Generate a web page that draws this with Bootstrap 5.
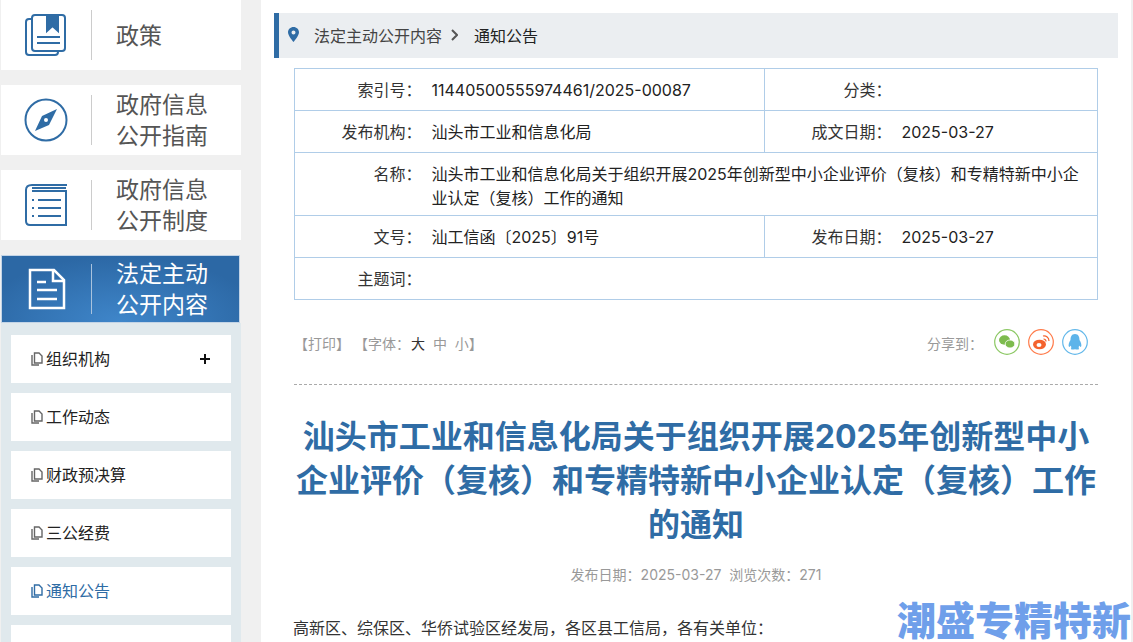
<!doctype html>
<html lang="zh">
<head>
<meta charset="utf-8">
<title>通知公告</title>
<link href="https://cdn.jsdelivr.net/npm/bootstrap@5.3.0/dist/css/bootstrap.min.css" rel="stylesheet">
<style>
html,body{height:642px;overflow:hidden}
body{background:#f0f0f0;font-family:Inter,"Noto Sans CJK SC","Liberation Sans",sans-serif;font-size:16px;color:#333;position:relative}
.shell{height:642px;padding-right:2px}
.sidebar{width:261px;flex:none;padding-left:1px;padding-right:20px}
.bigitem{height:70px;margin-bottom:15px;background:#fff;color:#555;font-size:23px;line-height:31px}
.bigtxt{padding-top:1px}
.bigtxt.solo{padding-top:3px}
.bigitem.on{height:68px;margin-bottom:0;margin-right:1px;color:#fff;border:1px solid #c3d4e6;background:radial-gradient(ellipse 60% 100% at 50% 100%,#3f86ca,#2c68a5)}
.bigicon{width:90px;flex:none}
.on .bigicon{width:89px}
.bigrule{width:1px;height:50px;background:#ccc;flex:none;margin-right:24px}
.on .bigrule{background:#a9c3de}
.submenu{background:#e0e9ed;padding:12px 10px 0}
.subitem{height:48px;background:#fff;margin-bottom:10px;padding:0 21px 0 20px;color:#222;line-height:24px}
.subitem.cur{color:#2f6ca5}
.pageglyph{margin-right:3px;flex:none}
.mainpane{background:#fff;padding:13px 13px 0 13px;min-width:0}
.crumb{height:45px;background:#ebeef1;border-left:5px solid #2f6ca5;padding:0 0 0 9px;color:#444}
.crumb .pin{margin-right:15px;margin-bottom:2px}
.crumb .sep{margin:0 16px 2px 9px}
.crumb .now{color:#222}
.metawrap{margin:10px 20px 0}
.metatable{table-layout:fixed;width:803px;border-collapse:collapse;color:#222;margin:0}
.metatable td{border:1px solid #b0cde8;padding:0 10px 0 9px;height:42px;vertical-align:middle;line-height:24px}
.metatable td.lab{text-align:right;padding:0 1px 0 0;color:#333;border-right:0}
.metatable td.val{border-left:0}
.metatable tr.tall td{height:63px;vertical-align:top;padding-top:9px}
.tools{height:85px;border-bottom:1px dashed #aaa;padding:3px 10px 0 0;color:#999;font-size:14px}
.tools .blk{color:#333;margin-left:1px}
.fontsizes span{margin-left:4px}
.sharewrap{margin-top:-3px}
.sharelabel{margin-top:3px;margin-right:3px}
.sharebtn{margin-left:8px}
.headline{color:#2f6ca5;font-size:32px;font-weight:700;line-height:44px;text-align:center;margin:30px 0 0}
.dateline{color:#999;font-size:14px;text-align:center;margin-top:18px;line-height:20px}
.para{margin:31px 0 0;color:#333;line-height:24px;margin-left:-1px}
.brandmark{position:absolute;left:897px;top:600px;white-space:nowrap;font-size:39px;line-height:42px;font-weight:900;color:#6f9fea}
</style>
</head>
<body>
<div class="shell d-flex">
  <aside class="sidebar">
    <div class="bigitem d-flex align-items-center">
      <div class="bigicon d-flex justify-content-center">
        <svg width="42" height="43" viewBox="0 0 42 43" fill="none" stroke="#2f6ca5" stroke-width="2"><path d="M6 5 H4 Q1 5 1 8 V38 Q1 41 4 41 H30 Q33 41 33 38"/><rect x="7" y="1" width="33" height="36" rx="3"/><path d="M22 1 H33 V17 L27.5 12 L22 17 Z" fill="#2f6ca5"/><path d="M12 23 H35 M12 29 H35"/></svg>
      </div>
      <div class="bigrule"></div><div class="bigtxt solo">政策</div>
    </div>
    <div class="bigitem d-flex align-items-center">
      <div class="bigicon d-flex justify-content-center">
        <svg width="44" height="44" viewBox="0 0 44 44"><circle cx="22" cy="22" r="20.5" fill="none" stroke="#2f6ca5" stroke-width="2"/><path d="M33 11 L25 27 L11 33 L18 18 Z" fill="#2f6ca5"/><circle cx="22" cy="22" r="2" fill="#fff"/></svg>
      </div>
      <div class="bigrule"></div><div class="bigtxt">政府信息<br>公开指南</div>
    </div>
    <div class="bigitem d-flex align-items-center">
      <div class="bigicon d-flex justify-content-center">
        <svg width="44" height="44" viewBox="0 0 44 44" fill="none" stroke="#2f6ca5" stroke-width="2"><path d="M43 2 H8 Q2 2 2 7 V38 Q2 42 6 42 H42 V8 H8"/><path d="M8 5 H42" stroke-width="2"/><path d="M14 17 H37 M14 25 H37 M14 33 H37"/><path d="M8 17 H10 M8 25 H10 M8 33 H10"/></svg>
      </div>
      <div class="bigrule"></div><div class="bigtxt">政府信息<br>公开制度</div>
    </div>
    <div class="bigitem on d-flex align-items-center">
      <div class="bigicon d-flex justify-content-center">
        <svg width="38" height="42" viewBox="0 0 38 42" fill="none" stroke="#fff" stroke-width="2.5"><path d="M2 2 H26 L36 12 V40 H2 Z"/><path d="M25 2 V13 H36"/><path d="M9 14 H18 M9 22 H29 M9 31 H29"/></svg>
      </div>
      <div class="bigrule"></div><div class="bigtxt">法定主动<br>公开内容</div>
    </div>
    <div class="submenu">
      <div class="subitem d-flex align-items-center">
        <svg class="pageglyph" width="12" height="14" viewBox="0 0 12 14" fill="none" stroke="#666" stroke-width="1.4"><path d="M1 3 V13 H8"/><path d="M3.5 1 H8 L11 4 V11 H3.5 Z"/></svg>
        <span class="flex-grow-1">组织机构</span>
        <svg width="10" height="10" viewBox="0 0 10 10" stroke="#111" stroke-width="2"><path d="M0 5 H10 M5 0 V10"/></svg>
      </div>
      <div class="subitem d-flex align-items-center"><svg class="pageglyph" width="12" height="14" viewBox="0 0 12 14" fill="none" stroke="#666" stroke-width="1.4"><path d="M1 3 V13 H8"/><path d="M3.5 1 H8 L11 4 V11 H3.5 Z"/></svg><span>工作动态</span></div>
      <div class="subitem d-flex align-items-center"><svg class="pageglyph" width="12" height="14" viewBox="0 0 12 14" fill="none" stroke="#666" stroke-width="1.4"><path d="M1 3 V13 H8"/><path d="M3.5 1 H8 L11 4 V11 H3.5 Z"/></svg><span>财政预决算</span></div>
      <div class="subitem d-flex align-items-center"><svg class="pageglyph" width="12" height="14" viewBox="0 0 12 14" fill="none" stroke="#666" stroke-width="1.4"><path d="M1 3 V13 H8"/><path d="M3.5 1 H8 L11 4 V11 H3.5 Z"/></svg><span>三公经费</span></div>
      <div class="subitem cur d-flex align-items-center"><svg class="pageglyph" width="12" height="14" viewBox="0 0 12 14" fill="none" stroke="#2f6ca5" stroke-width="1.4"><path d="M1 3 V13 H8"/><path d="M3.5 1 H8 L11 4 V11 H3.5 Z"/></svg><span>通知公告</span></div>
      <div class="subitem"></div>
    </div>
  </aside>
  <main class="mainpane flex-grow-1">
    <div class="crumb d-flex align-items-center">
      <svg class="pin" width="11" height="15" viewBox="0 0 11 15"><path fill="#2f6ca5" fill-rule="evenodd" d="M5.5 0 C2.4 0 0 2.4 0 5.3 C0 9 5.5 15 5.5 15 S11 9 11 5.3 C11 2.4 8.6 0 5.5 0 Z M5.5 3.5 A2 2 0 1 1 5.5 7.5 A2 2 0 1 1 5.5 3.5 Z"/></svg>
      <span>法定主动公开内容</span>
      <svg class="sep" width="7" height="12" viewBox="0 0 7 12" fill="none" stroke="#555" stroke-width="2"><path d="M1 1 L6 6 L1 11"/></svg>
      <span class="now">通知公告</span>
    </div>
    <div class="metawrap">
      <table class="metatable">
        <colgroup><col style="width:128px"><col style="width:342px"><col style="width:128px"><col style="width:205px"></colgroup>
        <tr><td class="lab">索引号：</td><td class="val">11440500555974461/2025-00087</td><td class="lab">分类：</td><td class="val"></td></tr>
        <tr><td class="lab">发布机构：</td><td class="val">汕头市工业和信息化局</td><td class="lab">成文日期：</td><td class="val">2025-03-27</td></tr>
        <tr class="tall"><td class="lab">名称：</td><td class="val" colspan="3">汕头市工业和信息化局关于组织开展2025年创新型中小企业评价（复核）和专精特新中小企业认定（复核）工作的通知</td></tr>
        <tr><td class="lab">文号：</td><td class="val">汕工信函〔2025〕91号</td><td class="lab">发布日期：</td><td class="val">2025-03-27</td></tr>
        <tr><td class="lab">主题词：</td><td class="val" colspan="3"></td></tr>
      </table>
      <div class="tools d-flex align-items-center justify-content-between">
        <div class="fontsizes">【打印】 【字体：<span class="blk">大</span><span>&nbsp;中</span><span>&nbsp;小</span>】</div>
        <div class="d-flex align-items-center sharewrap">
          <span class="sharelabel">分享到：</span>
          <svg class="sharebtn" width="26" height="26" viewBox="0 0 26 26"><circle cx="13" cy="13" r="12.3" fill="none" stroke="#8cc864" stroke-width="1.2"/><ellipse cx="10.5" cy="11" rx="5.5" ry="4.7" fill="#7dbb4e"/><ellipse cx="16" cy="15" rx="4.8" ry="4" fill="#7dbb4e" stroke="#fff" stroke-width=".8"/></svg>
          <svg class="sharebtn" width="26" height="26" viewBox="0 0 26 26"><circle cx="13" cy="13" r="12.3" fill="none" stroke="#ff7b4a" stroke-width="1.2"/><ellipse cx="11.5" cy="15.5" rx="6.5" ry="4.8" fill="#f4632e"/><ellipse cx="11" cy="16" rx="2.5" ry="2" fill="#fff"/><path d="M15 7 A5 5 0 0 1 21 12 M15.5 10 A2.4 2.4 0 0 1 18 12.5" fill="none" stroke="#f4632e" stroke-width="1.2"/></svg>
          <svg class="sharebtn" width="26" height="26" viewBox="0 0 26 26"><circle cx="13" cy="13" r="12.3" fill="none" stroke="#63b8ea" stroke-width="1.2"/><path d="M13 5 C9.5 5 8.5 8 8.5 11 C7 13.5 6 16 7 18 C8 17.8 8.5 17 9 16.5 C9 18 9.8 19 8.8 20 C10 21 12 20.5 13 20.2 C14 20.5 16 21 17.2 20 C16.2 19 17 18 17 16.5 C17.5 17 18 17.8 19 18 C20 16 19 13.5 17.5 11 C17.5 8 16.5 5 13 5 Z" fill="#5db4ea"/></svg>
        </div>
      </div>
      <h1 class="headline">汕头市工业和信息化局关于组织开展2025年创新型中小企业评价（复核）和专精特新中小企业认定（复核）工作的通知</h1>
      <div class="dateline">发布日期：2025-03-27&nbsp; 浏览次数：271</div>
      <p class="para">高新区、综保区、华侨试验区经发局，各区县工信局，各有关单位：</p>
    </div>
  </main>
</div>
<div class="brandmark">潮盛专精特新</div>
<script src="https://cdn.jsdelivr.net/npm/bootstrap@5.3.0/dist/js/bootstrap.bundle.min.js"></script>
</body>
</html>
